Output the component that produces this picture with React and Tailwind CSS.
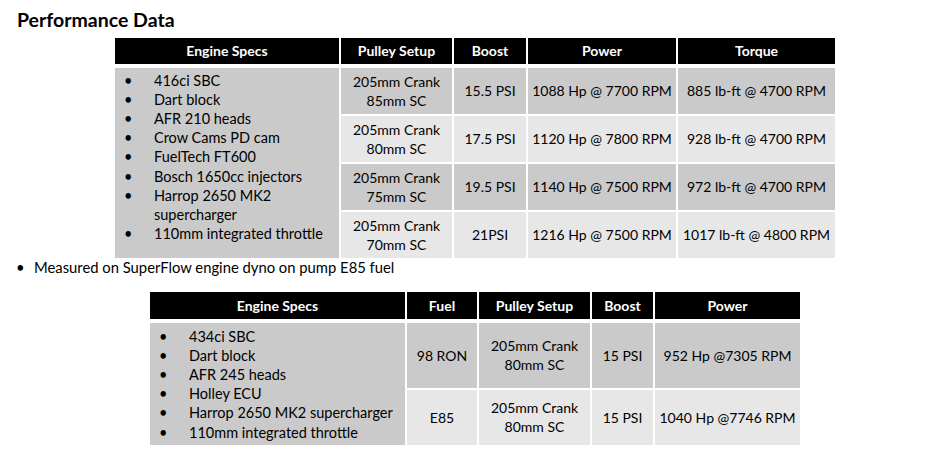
import React from 'react';

const topRows = [
  { pulley: ['205mm Crank', '85mm SC'], boost: '15.5 PSI', power: '1088 Hp @ 7700 RPM', torque: '885 lb-ft @ 4700 RPM' },
  { pulley: ['205mm Crank', '80mm SC'], boost: '17.5 PSI', power: '1120 Hp @ 7800 RPM', torque: '928 lb-ft @ 4700 RPM' },
  { pulley: ['205mm Crank', '75mm SC'], boost: '19.5 PSI', power: '1140 Hp @ 7500 RPM', torque: '972 lb-ft @ 4700 RPM' },
  { pulley: ['205mm Crank', '70mm SC'], boost: '21PSI', power: '1216 Hp @ 7500 RPM', torque: '1017 lb-ft @ 4800 RPM' },
];

const topSpecs = [
  '416ci SBC',
  'Dart block',
  'AFR 210 heads',
  'Crow Cams PD cam',
  'FuelTech FT600',
  'Bosch 1650cc injectors',
  'Harrop 2650 MK2 supercharger',
  '110mm integrated throttle',
];

const bottomRows = [
  { fuel: '98 RON', pulley: ['205mm Crank', '80mm SC'], boost: '15 PSI', power: '952 Hp @7305 RPM' },
  { fuel: 'E85', pulley: ['205mm Crank', '80mm SC'], boost: '15 PSI', power: '1040 Hp @7746 RPM' },
];

const bottomSpecs = [
  '434ci SBC',
  'Dart block',
  'AFR 245 heads',
  'Holley ECU',
  'Harrop 2650 MK2 supercharger',
  '110mm integrated throttle',
];

const Head = ({ children }) => (
  <div className="bg-black text-white font-bold flex items-center justify-center mb-[2px]">{children}</div>
);

const Cell = ({ dark, children }) => (
  <div className={`${dark ? 'bg-[#cacaca]' : 'bg-[#e7e7e7]'} flex flex-col items-center justify-center text-center leading-[19px] whitespace-nowrap`}>
    {children}
  </div>
);

// bullet sits ~11px in, text starts ~39px in
const SpecList = ({ items, width }) => (
  <ul className="text-[14.5px]">
    {items.map((s) => (
      <li key={s} className="flex leading-[19.2px]">
        <span className="block w-[39px] min-w-[39px] pl-[9px] shrink-0">•</span>
        <span style={{ maxWidth: width }}>{s}</span>
      </li>
    ))}
  </ul>
);

const App = () => {
  return (
    <div className="w-[941px] h-[452px] bg-white text-black text-[14px] relative overflow-hidden" style={{ fontFamily: 'Lato, "Open Sans", sans-serif' }}>
      <h1 className="text-[19.5px] font-bold leading-none pl-[17px] pt-[10px]">Performance Data</h1>

      <div className="ml-[115px] mt-[8px] w-[720px] grid grid-cols-[224px_111px_72px_148px_157px] grid-rows-[28px_46px_46px_46px_46px] gap-[2px]">
        <Head>Engine Specs</Head>
        <Head>Pulley Setup</Head>
        <Head>Boost</Head>
        <Head>Power</Head>
        <Head>Torque</Head>
        <div className="row-span-4 bg-[#cacaca] pt-[3px]">
          <SpecList items={topSpecs} width="180px" />
        </div>
        {topRows.map((r, i) => (
          <React.Fragment key={i}>
            <Cell dark={i % 2 === 0}>
              <span>{r.pulley[0]}</span>
              <span>{r.pulley[1]}</span>
            </Cell>
            <Cell dark={i % 2 === 0}>{r.boost}</Cell>
            <Cell dark={i % 2 === 0}>{r.power}</Cell>
            <Cell dark={i % 2 === 0}>{r.torque}</Cell>
          </React.Fragment>
        ))}
      </div>

      <div className="flex items-center text-[14.8px] leading-[19px]">
        <span className="w-[34px] min-w-[34px] pl-[16px]">•</span>
        <span>Measured on SuperFlow engine dyno on pump E85 fuel</span>
      </div>

      <div className="ml-[150px] mt-[15px] w-[650px] grid grid-cols-[255px_70px_111px_61px_145px] grid-rows-[29px_65px_55px] gap-[2px]">
        <Head>Engine Specs</Head>
        <Head>Fuel</Head>
        <Head>Pulley Setup</Head>
        <Head>Boost</Head>
        <Head>Power</Head>
        <div className="row-span-2 bg-[#cacaca] pt-[4px]">
          <SpecList items={bottomSpecs} width="260px" />
        </div>
        {bottomRows.map((r, i) => (
          <React.Fragment key={i}>
            <Cell dark={i % 2 === 0}>{r.fuel}</Cell>
            <Cell dark={i % 2 === 0}>
              <span>{r.pulley[0]}</span>
              <span>{r.pulley[1]}</span>
            </Cell>
            <Cell dark={i % 2 === 0}>{r.boost}</Cell>
            <Cell dark={i % 2 === 0}>{r.power}</Cell>
          </React.Fragment>
        ))}
      </div>
    </div>
  );
};

export default App;
